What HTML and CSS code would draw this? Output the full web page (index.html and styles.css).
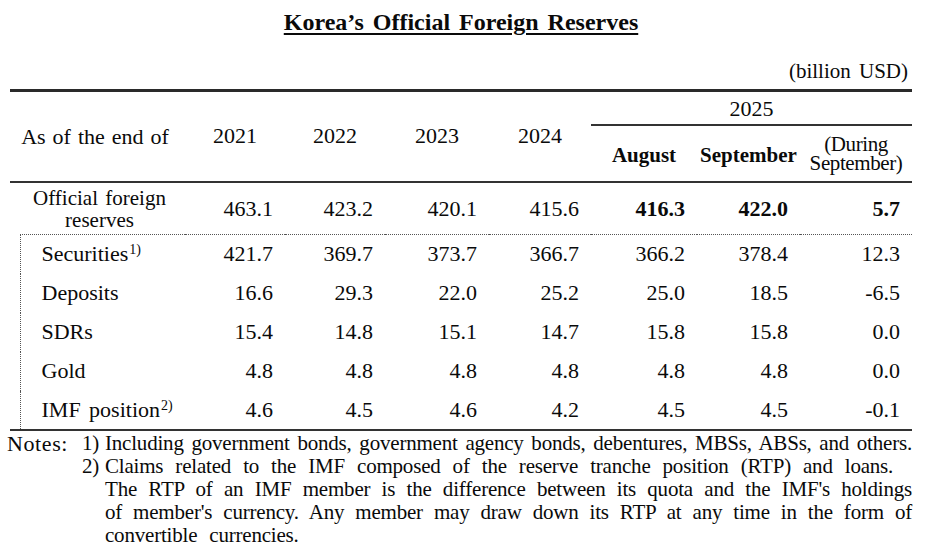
FILE: index.html
```html
<!DOCTYPE html>
<html lang="en">
<head>
<meta charset="utf-8">
<title>Korea's Official Foreign Reserves</title>
<link rel="stylesheet" href="styles.css">
</head>
<body>
<h1 class="title"><span>Korea’s Official Foreign Reserves</span></h1>
<div class="unit">(billion USD)</div>
<table class="reserves">
  <colgroup>
    <col class="c-spacer"><col class="c-label"><col class="c-100"><col class="c-100"><col class="c-104"><col class="c-102"><col class="c-106"><col class="c-103"><col class="c-112">
  </colgroup>
  <thead>
    <tr class="h1">
      <th colspan="2" rowspan="2" class="hlabel">As of the end of</th>
      <th rowspan="2">2021</th>
      <th rowspan="2">2022</th>
      <th rowspan="2">2023</th>
      <th rowspan="2">2024</th>
      <th colspan="3" class="y2025">2025</th>
    </tr>
    <tr class="h2">
      <th class="bold">August</th>
      <th class="bold">September</th>
      <th class="during">(During<br>September)</th>
    </tr>
  </thead>
  <tbody>
    <tr class="total">
      <td colspan="2" class="tlabel">Official foreign<br>reserves</td>
      <td>463.1</td><td>423.2</td><td>420.1</td><td>415.6</td>
      <td class="bold">416.3</td><td class="bold">422.0</td><td class="bold">5.7</td>
    </tr>
    <tr class="item first">
      <td class="spacer"></td>
      <td class="label">Securities<sup>1)</sup></td>
      <td>421.7</td><td>369.7</td><td>373.7</td><td>366.7</td><td>366.2</td><td>378.4</td><td>12.3</td>
    </tr>
    <tr class="item">
      <td class="spacer"></td>
      <td class="label">Deposits</td>
      <td>16.6</td><td>29.3</td><td>22.0</td><td>25.2</td><td>25.0</td><td>18.5</td><td>-6.5</td>
    </tr>
    <tr class="item">
      <td class="spacer"></td>
      <td class="label">SDRs</td>
      <td>15.4</td><td>14.8</td><td>15.1</td><td>14.7</td><td>15.8</td><td>15.8</td><td>0.0</td>
    </tr>
    <tr class="item">
      <td class="spacer"></td>
      <td class="label">Gold</td>
      <td>4.8</td><td>4.8</td><td>4.8</td><td>4.8</td><td>4.8</td><td>4.8</td><td>0.0</td>
    </tr>
    <tr class="item last">
      <td class="spacer"></td>
      <td class="label">IMF position<sup>2)</sup></td>
      <td>4.6</td><td>4.5</td><td>4.6</td><td>4.2</td><td>4.5</td><td>4.5</td><td>-0.1</td>
    </tr>
  </tbody>
</table>
<div class="notes">
  <div class="n-head">Notes:</div>
  <div class="n-num">1)</div>
  <div class="n-text">
    <div class="n-line just">Including government bonds, government agency bonds, debentures, MBSs, ABSs, and others.</div>
  </div>
  <div class="n-head"></div>
  <div class="n-num">2)</div>
  <div class="n-text">
    <div class="n-line wide">Claims related to the IMF composed of the reserve tranche position (RTP) and loans.</div>
    <div class="n-line just">The RTP of an IMF member is the difference between its quota and the IMF's holdings</div>
    <div class="n-line just">of member's currency. Any member may draw down its RTP at any time in the form of</div>
    <div class="n-line wide">convertible currencies.</div>
  </div>
</div>
</body>
</html>
```

FILE: styles.css
```css
html, body {
  margin: 0;
  padding: 0;
  background: #ffffff;
}
body {
  width: 927px;
  height: 555px;
  overflow: hidden;
  font-family: "Liberation Serif", "Times New Roman", serif;
  color: #0a0a0a;
}
.title {
  margin: 0;
  padding-top: 7px;
  height: 38px;
  text-align: center;
  font-size: 24px;
  line-height: 30px;
  font-weight: bold;
  word-spacing: 3px;
  padding-right: 5px;
}
.title span {
  text-decoration: underline;
  text-decoration-thickness: 2px;
  text-underline-offset: 3px;
}
.unit {
  width: 908px;
  text-align: right;
  font-size: 21px;
  line-height: 26px;
  height: 26px;
  padding-top: 13px;
  padding-bottom: 5px;
  word-spacing: 3px;
}
.reserves {
  margin-left: 10px;
  width: 902px;
  table-layout: fixed;
  border-collapse: collapse;
  font-size: 22px;
}
.c-spacer { width: 10px; }
.c-label { width: 165px; }
.c-100 { width: 100px; }
.c-104 { width: 104px; }
.c-102 { width: 102px; }
.c-106 { width: 106px; }
.c-103 { width: 103px; }
.c-112 { width: 112px; }

.reserves th {
  font-weight: normal;
  padding: 0;
  text-align: center;
  vertical-align: middle;
}
.reserves thead tr.h1 th { border-top: 3px solid #2a2a2a; }
.reserves tr.h1 { height: 34px; }
.reserves tr.h2 { height: 57px; }
.reserves thead tr.h2 th,
.reserves thead th[rowspan] { border-bottom: 2px solid #333; }
.reserves th.y2025 { border-bottom: 2px solid #333; padding-top: 3px; }
.reserves th.hlabel { padding-top: 2px; padding-right: 5px; word-spacing: 1.5px; }
.reserves .bold { font-weight: bold; }
.reserves th.bold { font-size: 21px; padding-top: 4px; }
.reserves th.during {
  font-size: 21px;
  line-height: 19px;
  letter-spacing: -0.4px;
  padding-top: 2px;
}
.reserves td {
  padding: 0 12px 0 0;
  text-align: right;
  vertical-align: middle;
  white-space: nowrap;
}
.reserves tr.total { height: 53px; }
.reserves td.tlabel {
  text-align: center;
  font-size: 21px;
  line-height: 22px;
  padding: 0 0 0 4px;
  word-spacing: 2px;
  white-space: normal;
}
.reserves tr.total td { padding-top: 2px; }
.reserves tr.item { height: 39px; }
.reserves tr.item td.spacer { padding: 0; }
.reserves tr.item td.label {
  text-align: left;
  padding-left: 21px;
  border-left: 1px dotted #555;
  word-spacing: 3px;
}
.reserves tr.item.first td:not(.spacer) { border-top: 1px dotted #555; }
.reserves tr.item.last td { border-bottom: 2px solid #333; }
.reserves sup {
  font-size: 14px;
  line-height: 0;
  vertical-align: 7px;
  margin-left: 1px;
}
.notes {
  display: grid;
  grid-template-columns: 63px 35px 807px;
  margin-left: 7px;
  margin-top: 1px;
  font-size: 21px;
  line-height: 23px;
  letter-spacing: -0.2px;
}
.n-head { font-size: 22px; letter-spacing: 0.6px; }
.n-num { text-align: right; padding-right: 6px; }
.n-line { white-space: nowrap; }
.n-line.just { text-align: justify; text-align-last: justify; }
.n-line.wide { word-spacing: 7px; }
```
